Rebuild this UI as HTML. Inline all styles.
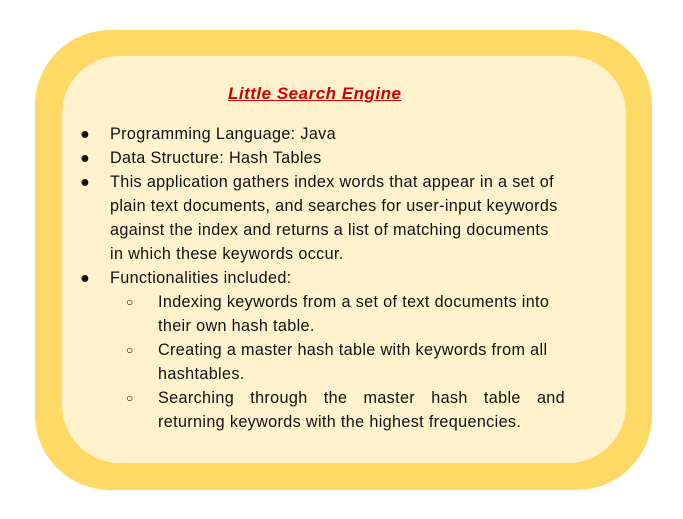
<html><head><style>
body{margin:0;width:683px;height:519px;background:#fff;position:relative;overflow:hidden;font-family:"Liberation Sans",sans-serif;}
.o{position:absolute;left:35px;top:30px;width:617px;height:460px;background:#ffd966;border-radius:75px;}
.i{position:absolute;left:62px;top:56px;width:564px;height:407px;background:#fff2cc;border-radius:58px;}
.t{position:absolute;left:0;width:683px;font-size:16.2px;letter-spacing:0.35px;color:#111;white-space:nowrap;line-height:24px;}
.t span{position:absolute;}
.h{position:absolute;left:228px;top:84px;font-size:17px;font-weight:bold;font-style:italic;color:#cc0000;text-decoration:underline;letter-spacing:0.5px;}
</style></head><body>
<div class="o"></div><div class="i"></div>
<div class="h">Little Search Engine</div>
<div class="t" style="top:122px"><span style="left:80px">●</span><span style="left:110px">Programming Language: Java</span></div>
<div class="t" style="top:146px"><span style="left:80px">●</span><span style="left:110px">Data Structure: Hash Tables</span></div>
<div class="t" style="top:170px"><span style="left:80px">●</span><span style="left:110px">This application gathers index words that appear in a set of</span></div>
<div class="t" style="top:194px"><span style="left:110px">plain text documents, and searches for user-input keywords</span></div>
<div class="t" style="top:218px"><span style="left:110px">against the index and returns a list of matching documents</span></div>
<div class="t" style="top:242px"><span style="left:110px">in which these keywords occur.</span></div>
<div class="t" style="top:266px"><span style="left:80px">●</span><span style="left:110px">Functionalities included:</span></div>
<div class="t" style="top:290px"><span style="left:126px;font-size:12px">○</span><span style="left:158px">Indexing keywords from a set of text documents into</span></div>
<div class="t" style="top:314px"><span style="left:158px">their own hash table.</span></div>
<div class="t" style="top:338px"><span style="left:126px;font-size:12px">○</span><span style="left:158px">Creating a master hash table with keywords from all</span></div>
<div class="t" style="top:362px"><span style="left:158px">hashtables.</span></div>
<div class="t" style="top:386px"><span style="left:126px;font-size:12px">○</span><span style="left:158px;width:407px;text-align:justify;text-align-last:justify">Searching through the master hash table and</span></div>
<div class="t" style="top:410px"><span style="left:158px">returning keywords with the highest frequencies.</span></div>
</body></html>
